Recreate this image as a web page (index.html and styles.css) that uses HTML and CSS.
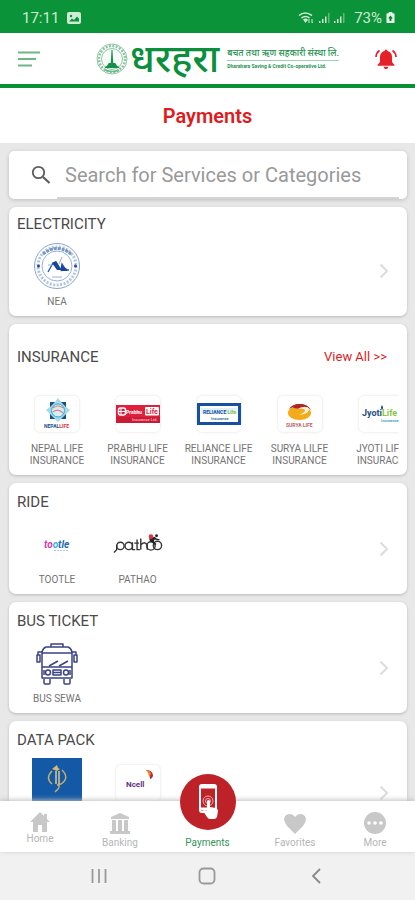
FILE: index.html
```html
<!DOCTYPE html>
<html lang="en">
<head>
<meta charset="utf-8">
<meta name="viewport" content="width=device-width, initial-scale=1">
<title>Payments</title>
<link rel="stylesheet" href="styles.css">
</head>
<body>
<div class="app">
  <div class="status">
    <span class="status-time">17:11</span>
    <svg class="status-photo" viewBox="0 0 14 12"><rect width="14" height="12" rx="2" fill="#cfebd3"/><path d="M2 9.500l3-3 2 1.500 3-3.500 2 2v3z" fill="#0a9338"/><circle cx="4" cy="4" r="1.200" fill="#0a9338"/></svg>
    <svg class="status-signal" viewBox="0 0 48 16">
      <g fill="none" stroke="#cfebd3" stroke-width="1.600"><path d="M1 5.500q6-5 13 0M3.500 8q4-3 8 0"/></g>
      <path d="M5 9.500q2.500-2 5 0L7.500 13z" fill="#cfebd3"/><path d="M11 13V9.500l-1 1M14 9v4l1-1" stroke="#cfebd3" fill="none"/>
      <g fill="#cfebd3"><path d="M21 11h1.500v2H21zM24 9h1.500v4H24zM27 6.500h1.500V13H27z"/><path d="M36 11h1.500v2H36zM39 9h1.500v4H39zM42 6.500h1.500V13H42z"/></g>
      <g fill="#5fb978"><path d="M30 3h1.500v10H30zM45 3h1.500v10H45z"/></g>
    </svg>
    <span>73%</span>
    <svg class="status-battery" viewBox="0 0 10 13"><path d="M3 0h4v1.500h1.500q1 0 1 1V12q0 1-1 1h-7q-1 0-1-1V2.500q0-1 1-1H3z" fill="#e3f5e6"/><path d="M5 4l2.500 3L6 7.500V10H4V7.500L2.500 7z" fill="#0a7a30"/></svg>
  </div>

  <header class="header">
    <button class="icon-button" type="button" aria-label="Menu">
      <svg class="menu-icon" viewBox="0 0 22 16"><path d="M0 1.500h22M0 8h18M0 14.500h14" stroke="#6fb588" stroke-width="2"/></svg>
    </button>
    <div class="brand">
      <svg class="brand-emblem" viewBox="0 0 32 32">
        <circle cx="16" cy="16" r="15" fill="none" stroke="#8cc8a3"/>
        <circle cx="16" cy="16" r="13" fill="none" stroke="#8cc4a1" stroke-width="2.500" stroke-dasharray="2 1.400"/>
        <circle cx="16" cy="16" r="10.500" fill="#f8fcf9" stroke="#8fc7a5"/>
        <path d="M15.500 7h1l.700 13h2l2 3 2 1v1H8.800v-1l2-1 2-3h2z" fill="#13914a"/>
        <path d="M9 27q7 3 14 0" fill="none" stroke="#6fb98c" stroke-width="1.500"/>
      </svg>
      <span class="brand-name" lang="ne">धरहरा</span>
      <div class="brand-detail">
        <span class="brand-line" lang="ne">बचत तथा ऋण सहकारी संस्था लि.</span>
        <span class="brand-sub">Dharahara Saving &amp; Credit Co-operative Ltd.</span>
      </div>
    </div>
    <button class="icon-button" type="button" aria-label="Notifications">
      <svg class="bell-icon" viewBox="0 0 22 22"><path d="M11 1.500q1.300 0 1.500 1.500 4.500 1.300 4.500 6v5l2.500 3v.800h-17V17L5 14V9q0-4.700 4.500-6 .200-1.500 1.500-1.500z" fill="#e62229"/><path d="M8.500 18.800h5q-.500 2.400-2.500 2.400t-2.500-2.400z" fill="#e62229"/><path d="M1 9q.300-4.500 3.500-6.500M21 9q-.300-4.500-3.500-6.500" fill="none" stroke="#e62229" stroke-width="1.700"/></svg>
    </button>
  </header>

  <h1 class="title">Payments</h1>

  <main class="content">
    <label class="search">
      <svg class="search-icon" viewBox="0 0 20 20"><circle cx="7.500" cy="7.500" r="5.700" fill="none" stroke="#5c5c5c" stroke-width="1.800"/><path d="M12 12l6.500 6" stroke="#5c5c5c" stroke-width="2.200"/></svg>
      <input class="search-input" type="search" placeholder="Search for Services or Categories" aria-label="Search for Services or Categories">
    </label>

    <section class="card card-first">
      <h2 class="card-title">ELECTRICITY</h2>
      <div class="card-body">
        <div class="strip">
          <a class="tile" href="#nea">
            <svg class="tile-icon" viewBox="0 0 50 50">
              <circle cx="25" cy="24" r="22.500" fill="#fff" stroke="#8ba6cc"/>
              <circle cx="25" cy="24" r="19" fill="none" stroke="#b4c6df" stroke-width="3" stroke-dasharray="2 1.500"/>
              <path d="M11 12q14-11 28 0" fill="none" stroke="#7497c2" stroke-width="3" stroke-dasharray="3 1"/>
              <circle cx="25" cy="24" r="15" fill="#fff" stroke="#9bb3d4"/>
              <path d="M16 30l5-9 3-1 5 8 1-6 4 6h3" fill="none" stroke="#2150a4" stroke-width="1.300"/><path d="M20 21l4-2 5 9h-4zM29 23l6 4v2h-6z" fill="#1745a0"/><path d="M27 22l3-7M16 23h4M20 35h10" stroke="#9ab2d0"/>
              <circle cx="6.500" cy="24" r="1.500" fill="#24489a"/><circle cx="43.500" cy="24" r="1.500" fill="#24489a"/>
            </svg>
            <span class="tile-label">NEA</span>
          </a>
        </div>
        <svg class="chevron" viewBox="0 0 10 16"><path d="M1.500 1.500L8 8l-6.500 6.500" fill="none" stroke="#dcdcdc" stroke-width="2"/></svg>
      </div>
    </section>

    <section class="card card-wide">
      <div class="card-head">
        <h2 class="card-title">INSURANCE</h2>
        <a class="view-all" href="#insurance">View All &gt;&gt;</a>
      </div>
      <div class="card-body">
        <div class="strip">
          <a class="tile" href="#nepal-life">
            <span class="tile-icon"><svg class="logo framed" viewBox="0 0 44 36">
              <path d="M15 6h5l3-4 3 4h5v5l4 3-4 4v5h-5l-3 3-3-3h-5v-5l-4-4 4-3z" fill="#9fdbe9"/>
              <path d="M15 6h5l-5 5zM31 6v5l-5-5zM15 23v-5l5 5zM31 23h-5l5-5z" fill="#174e8c"/>
              <circle cx="23" cy="14.500" r="6.500" fill="#d5eef4" stroke="#44a5c4"/><path d="M18 12q5-4 10 0M18 16q5-4 10 1" fill="none" stroke="#e78286" stroke-width="1.200"/>
              <text class="logo-text" x="9" y="32" font-size="5" fill="#174e8c">NEPAL<tspan fill="#e02e36">LIFE</tspan></text>
            </svg></span>
            <span class="tile-label">NEPAL LIFE INSURANCE</span>
          </a>
          <a class="tile" href="#prabhu-life">
            <span class="tile-icon"><svg class="logo framed" viewBox="0 0 44 36">
              <rect y="9" width="44" height="18" fill="#df1f3c"/><path d="M0 21h44v6H0z" fill="#c91a36"/>
              <rect x="2.500" y="12" width="7" height="7" rx="2" fill="none" stroke="#fff" stroke-width="1.500"/><path d="M5 12v7M2 15.500h7" stroke="#fff"/>
              <text class="logo-text" x="10" y="17.500" font-size="5" fill="#fff">Prabhu</text>
              <rect x="29" y="11" width="14" height="8.500" rx="1" fill="#fff"/><text class="logo-text" x="30" y="18" font-size="7" fill="#df1f3c">Life</text>
              <text class="logo-text" x="16" y="25" font-size="4" fill="#f3a5b0">Insurance Ltd.</text>
            </svg></span>
            <span class="tile-label">PRABHU LIFE INSURANCE</span>
          </a>
          <a class="tile" href="#reliance-life">
            <span class="tile-icon"><svg class="logo framed" viewBox="0 0 44 36">
              <rect x="1.500" y="8.500" width="41" height="19" fill="#fff" stroke="#1650a0" stroke-width="3"/>
              <rect x="4" y="12" width="36" height="6" fill="#e0f1fa"/>
              <text class="logo-text" x="6" y="17.500" font-size="5" fill="#1650a0">RELIANCE<tspan fill="#87bd45"> Life</tspan></text>
              <text class="logo-text" x="14" y="23.500" font-size="4" fill="#357a9d">Insurance</text>
            </svg></span>
            <span class="tile-label">RELIANCE LIFE INSURANCE</span>
          </a>
          <a class="tile" href="#surya-life">
            <span class="tile-icon"><svg class="logo framed" viewBox="0 0 44 36">
              <ellipse cx="21.500" cy="17" rx="11.500" ry="7" fill="#f3ab19"/>
              <path d="M11 13Q14 8 22 8t11 6q-4-4-8-3-8-2-14 2z" fill="#a71e27"/>
              <path d="M17 9q4-2 10 0l-4 4-8-1z" fill="#b42127"/>
              <path d="M20 13q6-1 7 1t-6 5q9-1 10-5 0-3-5-3-4 0-6 2z" fill="#fff5d9"/>
              <text class="logo-text" x="8" y="31" font-size="5" fill="#b66167">SURYA LIFE</text>
            </svg></span>
            <span class="tile-label">SURYA LILFE INSURANCE</span>
          </a>
          <a class="tile" href="#jyoti-life">
            <span class="tile-icon"><svg class="logo framed" viewBox="0 0 44 36">
              <text class="logo-text" x="3" y="20" font-size="9" fill="#244d83">Jyoti<tspan fill="#8ac541">Life</tspan></text>
              <path d="M23 9q-2 3 0 5 2-2 0-5z" fill="#244d83"/><text class="logo-text" x="22" y="26" font-size="4" fill="#4aa6bf">Insurance</text>
            </svg></span>
            <span class="tile-label">JYOTI LIFE INSURACE</span>
          </a>
        </div>
        <svg class="chevron" viewBox="0 0 10 16"><path d="M1.500 1.500L8 8l-6.500 6.500" fill="none" stroke="#dcdcdc" stroke-width="2"/></svg>
      </div>
    </section>

    <section class="card">
      <h2 class="card-title">RIDE</h2>
      <div class="card-body">
        <div class="strip">
          <a class="tile" href="#tootle">
            <svg class="tile-icon" viewBox="0 0 50 50">
              <text class="logo-text slanted" x="12" y="28" font-size="10" fill="#d43ba8">to<tspan fill="#3baee0">o</tspan><tspan fill="#2368b5">tle</tspan></text>
              <path d="M22 30.500h15" stroke="#a6c8e5" stroke-dasharray="2 1"/>
            </svg>
            <span class="tile-label">TOOTLE</span>
          </a>
          <a class="tile" href="#pathao">
            <svg class="tile-icon" viewBox="0 0 54 50">
              <g fill="none" stroke="#333" stroke-width="1.500"><circle cx="8" cy="26" r="4"/><path d="M4 25v5l-3 3"/><circle cx="17" cy="26" r="4"/><path d="M21 22v8h3M26 19v11h3M23 23h5M30 18v12M30 25q4-5 7 0v5"/><circle cx="41" cy="26" r="4.500"/><circle cx="48" cy="25.500" r="4.500"/></g>
              <path d="M39 18l6-2 2 2 4 1-2 1-4-1-1 2 3 3-1 1-6-4z" fill="#222"/><circle cx="41" cy="16" r="2.500" fill="#df343c"/><circle cx="47" cy="15" r="1.500" fill="#222"/>
            </svg>
            <span class="tile-label">PATHAO</span>
          </a>
        </div>
        <svg class="chevron" viewBox="0 0 10 16"><path d="M1.500 1.500L8 8l-6.500 6.500" fill="none" stroke="#dcdcdc" stroke-width="2"/></svg>
      </div>
    </section>

    <section class="card">
      <h2 class="card-title">BUS TICKET</h2>
      <div class="card-body">
        <div class="strip">
          <a class="tile" href="#bus-sewa">
            <svg class="tile-icon" viewBox="0 0 50 50">
              <g fill="none" stroke="#3a4384" stroke-width="1.500" stroke-linejoin="round">
                <path d="M19 8V5h12v3M14 8h22q3 1 4 5v26H10V13q1-4 4-5zM10 14h30M10 28h30"/>
                <path d="M10 13H6v3M5 16h3v7H5zM40 13h4v3M42 16h3v7h-3z"/>
                <path d="M12 40v4q0 1 1 1h4q1 0 1-1v-4M32 40v4q0 1 1 1h4q1 0 1-1v-4"/>
                <circle cx="16" cy="33.500" r="2.500"/><circle cx="34" cy="33.500" r="2.500"/>
                <path d="M21 31h8v5h-8zM21 33.500h8M12 31v5M38 31v5M17 27l9-5M27 27l9-5"/>
              </g>
            </svg>
            <span class="tile-label">BUS SEWA</span>
          </a>
        </div>
        <svg class="chevron" viewBox="0 0 10 16"><path d="M1.500 1.500L8 8l-6.500 6.500" fill="none" stroke="#dcdcdc" stroke-width="2"/></svg>
      </div>
    </section>

    <section class="card">
      <h2 class="card-title">DATA PACK</h2>
      <div class="card-body card-body-tall">
        <div class="strip">
          <a class="tile" href="#ntc" aria-label="NTC">
            <svg class="tile-icon" viewBox="0 0 50 50"><rect width="50" height="50" fill="#1459a5"/>
              <g fill="none" stroke="#c1ae6e" stroke-width="1.500"><path d="M20 13q-7 7 0 13M30 12q8 8-1 14l-4 1M25 27q4 0 1 4l-3 3"/><path d="M24 26V13M27 26V13" stroke="#e0c68c"/></g>
              <path d="M20 11l5-4 1 3 2 1-3 2z" fill="#d8b777"/>
            </svg>
          </a>
          <a class="tile" href="#ncell" aria-label="Ncell">
            <span class="tile-icon"><svg class="logo framed" viewBox="0 0 44 36">
              <text class="logo-text" x="10" y="22" font-size="8" fill="#5f3186">Ncell</text>
              <path d="M30 5q6 0 7 5 0 3-3 4 0-6-4-9z" fill="#bb2c3c"/><path d="M30 5q4 0 5 4-2 2-2 4 0-5-3-8z" fill="#ef8a24"/>
            </svg></span>
          </a>
        </div>
        <svg class="chevron" viewBox="0 0 10 16"><path d="M1.500 1.500L8 8l-6.500 6.500" fill="none" stroke="#dcdcdc" stroke-width="2"/></svg>
      </div>
    </section>
  </main>

  <nav class="tabs">
    <a class="tab" href="#home">
      <svg class="tab-icon tab-icon-short" viewBox="0 0 20 20"><path d="M10 0l4 4V2h3v5l3 3h-3v10h-5v-7H8v7H3V10H0z" fill="#c8c8c8"/></svg>
      <span>Home</span>
    </a>
    <a class="tab" href="#banking">
      <svg class="tab-icon" viewBox="0 0 22 24"><path d="M11 1l9 4v2H2V5zM3 8h4v11H3zM9 8h4v11H9zM15 8h4v11h-4zM1 19h20v3H1z" fill="#c8c8c8"/></svg>
      <span>Banking</span>
    </a>
    <a class="tab tab-active" href="#payments">
      <svg class="tab-fab" viewBox="0 0 56 56"><circle cx="28" cy="28" r="28" fill="#bd2229"/>
        <rect x="20" y="11" width="16" height="27" rx="2" fill="none" stroke="#fff" stroke-width="2"/><path d="M20 13h16M20 35h7" stroke="#fff" stroke-width="3"/>
        <g fill="none" stroke="#f0a8aa"><circle cx="28" cy="27" r="2.500"/><circle cx="28" cy="27" r="5"/></g>
        <path d="M27 27q1.500-2 3 0v6l6 1q2 1 2 3l-1 6q-1 2-3 2h-4q-2 0-3-2l-4-6q1-2 4 0z" fill="#fff"/>
      </svg>
      <span>Payments</span>
    </a>
    <a class="tab" href="#favorites">
      <svg class="tab-icon" viewBox="0 0 22 24"><path d="M11 22L3 14Q0 10 0 7q1-5 6-5 3 0 5 3 2-3 5-3 5 0 6 5 0 3-3 7z" fill="#c8c8c8"/></svg>
      <span>Favorites</span>
    </a>
    <a class="tab" href="#more">
      <svg class="tab-icon" viewBox="0 0 22 24"><circle cx="11" cy="11" r="11" fill="#c8c8c8"/><g fill="#fff"><circle cx="5" cy="11" r="1.800"/><circle cx="11" cy="11" r="1.800"/><circle cx="17" cy="11" r="1.800"/></g></svg>
      <span>More</span>
    </a>
  </nav>

  <div class="system">
    <button class="icon-button" type="button" aria-label="Recent apps"><svg class="system-icon" viewBox="0 0 18 18"><path d="M2.500 2v14M9 2v14M15.500 2v14" stroke="#999" stroke-width="1.800"/></svg></button>
    <button class="icon-button" type="button" aria-label="Home screen"><svg class="system-icon" viewBox="0 0 18 18"><rect x="1.500" y="1.500" width="15" height="15" rx="4" fill="none" stroke="#999" stroke-width="1.800"/></svg></button>
    <button class="icon-button" type="button" aria-label="Back"><svg class="system-icon" viewBox="0 0 18 18"><path d="M13 2L6 9l7 7" fill="none" stroke="#888" stroke-width="1.800"/></svg></button>
  </div>
</div>
</body>
</html>
```

FILE: styles.css
```css
* {
  box-sizing: border-box;
}

body {
  margin: 0;
  font-family: Roboto, "Noto Sans", sans-serif;
  color: #4a4a4a;
}

a {
  color: inherit;
  text-decoration: none;
}

svg {
  display: block;
}

.app {
  display: flex;
  flex-direction: column;
  height: 100vh;
  background: #fff;
}

.icon-button {
  padding: 0;
  border: 0;
  background: none;
}

.status {
  display: flex;
  flex: none;
  align-items: center;
  padding: 2px 20px 0 22px;
  height: 33px;
  background: #0a9338;
  color: #cfebd3;
  font-size: 15px;
}

.status-photo {
  width: 14px;
  margin-left: 8px;
}

.status-signal {
  width: 48px;
  margin: 0 8px 0 auto;
}

.status-battery {
  width: 9px;
  margin-left: 4px;
}

.header {
  display: flex;
  flex: none;
  align-items: center;
  padding: 0 18px;
  height: 55px;
  border-bottom: 4px solid #0a8f35;
}

.menu-icon {
  width: 22px;
}

.bell-icon {
  width: 22px;
}

.brand {
  display: flex;
  align-items: center;
  margin: 0 36px 0 auto;
}

.brand-emblem {
  width: 32px;
  margin-right: 2px;
}

.brand-name {
  color: #0a8f3c;
  font-size: 39px;
  font-weight: 500;
  line-height: 48px;
}

.brand-detail {
  display: flex;
  flex-direction: column;
  margin-left: 8px;
  white-space: nowrap;
  color: #1f9350;
}

.brand-line {
  border-bottom: 1px solid #9fcfb1;
  font-size: 9px;
  font-weight: 500;
  line-height: 14px;
}

.brand-sub {
  font-size: 5px;
  font-weight: 700;
  line-height: 10px;
}

.title {
  flex: none;
  margin: 0;
  padding: 16px 0 15px;
  color: #de1b20;
  font-size: 20px;
  font-weight: 600;
  line-height: 24px;
  text-align: center;
}

.content {
  display: flex;
  flex: 1;
  flex-direction: column;
  gap: 8px;
  min-height: 0;
  padding: 8px 8px 0 9px;
  overflow: hidden;
  background: #e8e8e8;
}

.search {
  display: flex;
  flex: none;
  align-items: center;
  height: 48px;
  padding: 0 8px 0 22px;
  border-radius: 5px;
  background: #fff;
  box-shadow: 0 1px 4px #bdbdbd;
}

.search-icon {
  flex: none;
  width: 20px;
  margin-right: 6px;
}

.search-input {
  flex: 1;
  min-width: 0;
  height: 48px;
  padding: 2px 8px 0;
  border: 0;
  border-bottom: 2px solid #d4d4d4;
  background: none;
  font-family: inherit;
  font-size: 20px;
  color: #555;
}

.search-input::placeholder {
  color: #999;
}

.card {
  flex: none;
  padding: 9px 8px;
  border-radius: 7px;
  background: #fff;
  box-shadow: 0 1px 3px #b8b8b8;
}

.card-first {
  padding-top: 7px;
}

.card-wide {
  padding-top: 23px;
}

.card-head {
  display: flex;
  justify-content: space-between;
  padding-right: 12px;
  margin-bottom: 22px;
}

.card-title {
  margin: 0 0 8px;
  font-size: 15px;
  font-weight: 400;
  line-height: 20px;
}

.card-head .card-title {
  margin: 0;
}

.view-all {
  color: #de1b20;
  font-size: 13px;
  line-height: 20px;
}

.card-body {
  position: relative;
}

.card-body-tall {
  min-height: 77px;
}

.strip {
  position: relative;
  z-index: 1;
  display: flex;
  overflow: hidden;
}

.tile {
  display: flex;
  flex: 0 0 81px;
  flex-direction: column;
  align-items: center;
  gap: 4px;
  padding: 0 1px;
}

.tile:first-child {
  flex-basis: 80px;
}

.tile-icon {
  display: grid;
  place-items: center;
  width: 50px;
  height: 50px;
}

.logo {
  width: 44px;
  height: 36px;
}

.framed {
  border-radius: 5px;
  background: #fff;
  box-shadow: 0 0 3px #dedede;
}

.logo-text {
  font-family: Roboto, sans-serif;
  font-weight: 700;
}

.slanted {
  font-style: italic;
}

.tile-label {
  margin-bottom: -1px;
  padding: 0 4px;
  color: #737373;
  font-size: 10px;
  line-height: 12px;
  text-align: center;
}

.chevron {
  position: absolute;
  top: 0;
  right: 10px;
  bottom: 8px;
  width: 10px;
  height: 16px;
  margin: auto 0;
}

.tabs {
  position: relative;
  z-index: 2;
  display: grid;
  flex: none;
  grid-template-columns: 80fr 80fr 95fr 80fr 80fr;
  height: 51px;
  background: #fff;
  box-shadow: 0 -1px 5px #bdbdbd;
}

.tab {
  position: relative;
  display: flex;
  flex-direction: column;
  align-items: center;
  padding-top: 11px;
  color: #b5b5b5;
  font-size: 10px;
  line-height: 14px;
}

.tab-icon {
  width: 22px;
  height: 24px;
}

.tab-icon-short {
  height: 20px;
}

.tab-active {
  padding-top: 35px;
  color: #35945a;
}

.tab-fab {
  position: absolute;
  top: -27px;
  width: 56px;
  height: 56px;
}

.system {
  display: flex;
  flex: none;
  justify-content: space-around;
  height: 48px;
  padding: 0 45px;
  background: #f1f1f1;
}

.system-icon {
  width: 18px;
  height: 18px;
}
```
